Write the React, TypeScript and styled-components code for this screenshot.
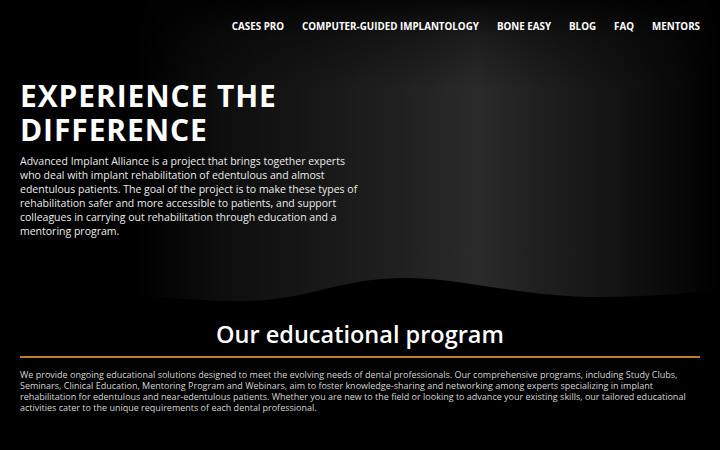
import styled, { createGlobalStyle } from 'styled-components';

const GlobalStyle = createGlobalStyle`
  html, body {
    margin: 0;
    padding: 0;
    background: #000;
  }
  body {
    font-family: "Open Sans", "DejaVu Sans", sans-serif;
    color: #fff;
  }
  * {
    box-sizing: border-box;
  }
`;

const Page = styled.div`
  width: 720px;
  min-height: 450px;
  background: #000;
  overflow: hidden;
`;

const Hero = styled.section`
  position: relative;
  height: 305px;
  background:
    linear-gradient(to bottom, rgba(0, 0, 0, 0.85) 0%, rgba(0, 0, 0, 0.35) 12%, rgba(0, 0, 0, 0) 30%),
    linear-gradient(
      to right,
      #000 0%,
      #000 19%,
      #0d0d0d 30%,
      #181818 45%,
      #222 58%,
      #2b2b2b 66%,
      #1f1f1f 75%,
      #141414 85%,
      #070707 95%,
      #000 100%
    );
`;

const Nav = styled.nav`
  display: flex;
  justify-content: flex-end;
  align-items: center;
  gap: 18px;
  padding: 20px 20px 0 0;
`;

const NavLink = styled.a`
  font-size: 9.8px;
  font-weight: 700;
  color: #fff;
  text-decoration: none;
  white-space: nowrap;
`;

const HeroContent = styled.div`
  padding: 46px 0 0 20px;
  width: 366px;
`;

const HeroTitle = styled.h1`
  margin: 0 0 7px;
  font-size: 30px;
  line-height: 34px;
  font-weight: 700;
  letter-spacing: 0.9px;
  color: #fff;
`;

const TitleLine = styled.span`
  display: block;
  height: 34px;
`;

const HeroText = styled.p`
  margin: 0;
  font-size: 10.5px;
  line-height: 14px;
  color: #ececec;
`;

const Wave = styled.svg`
  position: absolute;
  left: 0;
  bottom: 0;
  width: 720px;
  height: 40px;
  display: block;
`;

const Program = styled.section`
  padding: 15px 20px 0;
`;

const ProgramTitle = styled.h2`
  margin: 0;
  padding-bottom: 8px;
  text-align: center;
  font-size: 23.5px;
  line-height: 28px;
  font-weight: 600;
  color: #fff;
  border-bottom: 2px solid #c07f2c;
`;

const ProgramText = styled.p`
  margin: 11px 0 0;
  font-size: 9px;
  line-height: 11px;
  color: #d6d6d6;
`;

const links = ['CASES PRO', 'COMPUTER-GUIDED IMPLANTOLOGY', 'BONE EASY', 'BLOG', 'FAQ', 'MENTORS'];

export default function App() {
  return (
    <Page>
      <GlobalStyle />
      <Hero>
        <Nav>
          {links.map((l) => (
            <NavLink key={l} href="#">
              {l}
            </NavLink>
          ))}
        </Nav>
        <HeroContent>
          <HeroTitle>
            <TitleLine>EXPERIENCE THE</TitleLine>
            <TitleLine>DIFFERENCE</TitleLine>
          </HeroTitle>
          <HeroText>
            Advanced Implant Alliance is a project that brings together experts who deal with implant
            rehabilitation of edentulous and almost edentulous patients. The goal of the project is to
            make these types of rehabilitation safer and more accessible to patients, and support
            colleagues in carrying out rehabilitation through education and a mentoring program.
          </HeroText>
        </HeroContent>
        <Wave viewBox="0 0 720 40" preserveAspectRatio="none">
          <path
            d="M0,20 C80,22 180,38 250,36 C310,34 340,14 400,13 C460,12 520,32 600,32 C650,32 690,28 720,25 L720,40 L0,40 Z"
            fill="#000"
          />
        </Wave>
      </Hero>
      <Program>
        <ProgramTitle>Our educational program</ProgramTitle>
        <ProgramText>
          We provide ongoing educational solutions designed to meet the evolving needs of dental
          professionals. Our comprehensive programs, including Study Clubs, Seminars, Clinical
          Education, Mentoring Program and Webinars, aim to foster knowledge-sharing and networking
          among experts specializing in implant rehabilitation for edentulous and near-edentulous
          patients. Whether you are new to the field or looking to advance your existing skills, our
          tailored educational activities cater to the unique requirements of each dental
          professional.
        </ProgramText>
      </Program>
    </Page>
  );
}
